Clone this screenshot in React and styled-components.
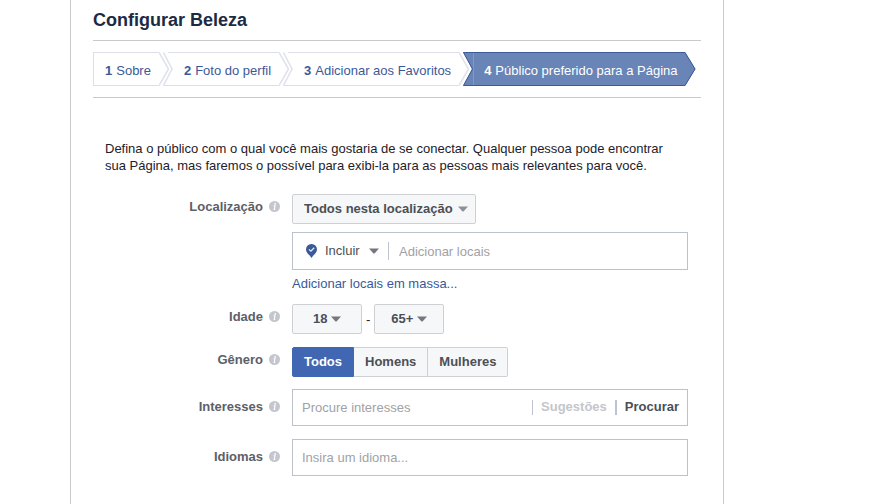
import React, { useState } from "react";
import styled, { createGlobalStyle, css } from "styled-components";

const GlobalStyle = createGlobalStyle`
  *, *::before, *::after { box-sizing: border-box; }
  body { margin: 0; background: #fff; }
  body, button, input, select {
    font-family: "Liberation Sans", Arial, Helvetica, sans-serif;
    font-size: 13px;
    line-height: 17px;
    color: #1d2129;
  }
`;

const Panel = styled.main`
  min-height: 100vh;
  margin: 0 145px 0 70px;
  padding: 8px 22px 0;
  border: solid #c9cacc;
  border-width: 0 1px;
`;

const Title = styled.h1`
  margin: 0;
  padding-bottom: 8px;
  font-size: 18px;
  line-height: 24px;
  color: #1c2a44;
`;

const Steps = styled.ol`
  display: flex;
  margin: 0;
  padding: 11px 0;
  border: solid #c9cacc;
  border-width: 1px 0;
  list-style: none;
`;

const Step = styled.li`
  display: flex;
  height: 34px;
  white-space: nowrap;
`;

const StepLink = styled.a`
  display: flex;
  align-items: center;
  gap: 4px;
  padding: 2px 8px 0 11px;
  border: solid #dcdfe9;
  border-width: 1px 0;
  color: #3b5998;
  text-decoration: none;

  ${Step}:first-child & { border-left-width: 1px; }

  ${(p) =>
    p.$active &&
    css`
      background: #6984b7;
      border-color: #3c5a98;
      color: #fff;
      box-shadow: inset 1px 0 #8198c4;
    `}
`;

const Chevron = styled.svg`
  display: block;
  flex: none;
  height: 34px;
`;

const Intro = styled.p`
  margin: 0;
  padding: 42px 30px 20px 12px;
`;

const Form = styled.form`
  padding: 0 13px 28px 12px;
`;

const Row = styled.div`
  display: grid;
  grid-template-columns: 175px minmax(0, 1fr);
  column-gap: 12px;
  align-items: start;
  margin-bottom: ${(p) => p.$gap || 12}px;
`;

const LabelCell = styled.div`
  display: flex;
  justify-content: flex-end;
  align-items: center;
  gap: 6px;
  padding-top: ${(p) => (p.$tall ? 9 : 4)}px;
  color: #5c6068;
  font-weight: bold;
`;

const Stack = styled.div`
  display: flex;
  flex-direction: column;
  align-items: flex-start;
  gap: 8px;
`;

const Inline = styled.div`
  display: flex;
  align-items: center;
  gap: 4px;
`;

const SelectWrap = styled.span`
  display: inline-grid;
  flex: none;
  align-items: center;
  width: ${(p) => p.$width}px;

  > * { grid-area: 1 / 1; }
  > svg {
    z-index: 1;
    justify-self: start;
    margin-left: 4px;
    pointer-events: none;
  }
  > svg:last-child {
    justify-self: end;
    margin-right: ${(p) => p.$arrow}px;
  }
`;

const Select = styled.select`
  appearance: none;
  width: 100%;
  height: 30px;
  margin: 0;
  padding: 0 0 2px ${(p) => p.$pad}px;
  border: 1px solid #ced0d4;
  border-radius: 2px;
  background: #f6f7f9;
  color: #4b4f56;
  font-weight: bold;

  ${(p) =>
    p.$plain &&
    css`
      border-color: transparent;
      background: transparent;
      font-weight: normal;
    `}
`;

const Field = styled.div`
  display: flex;
  align-items: center;
  width: 100%;
  height: ${(p) => p.$height || 37}px;
  padding: 0 8px 0 9px;
  border: 1px solid #bdc1c9;
  background: #fff;
`;

const TextInput = styled.input`
  flex: 1;
  min-width: 0;
  padding: 0;
  border: 0;
  outline: 0;
  background: transparent;

  &::placeholder { color: #a0a2a6; opacity: 1; }
`;

const Divider = styled.span`
  flex: none;
  width: ${(p) => p.$width || 1}px;
  height: 15px;
  background: #bdc3d0;
`;

const PickerDivider = styled(Divider)`
  height: 18px;
  margin: 0 10px 0 4px;
`;

const TextButton = styled.button`
  padding: 0 0 2px;
  margin: 0 8px;
  border: 0;
  background: none;
  font-weight: bold;
  color: #4b4f56;

  &:disabled { color: #c5c6c9; }
  &:last-child { margin-right: 0; }
`;

const BulkLink = styled.a`
  margin-top: -3px;
  color: #3b5998;
  text-decoration: none;
`;

const Segments = styled.div`
  display: flex;
`;

const Segment = styled.button`
  height: 30px;
  padding: 0 11px 2px;
  border: solid #ced0d4;
  border-width: 1px 1px 1px 0;
  background: #f6f7f9;
  color: #4b4f56;
  font-weight: bold;

  &:first-child { border-left-width: 1px; border-radius: 2px 0 0 2px; }
  &:last-child { border-radius: 0 2px 2px 0; }

  &[aria-pressed="true"] {
    background: #4267b2;
    border-color: #4267b2;
    color: #fff;
  }
`;

function StepArrow({ next }) {
  if (next === "end") {
    return (
      <Chevron width="11" viewBox="0 0 11 34" aria-hidden="true">
        <path d="M0 0 L10.5 17 L0 34Z" fill="#6984b7" />
        <path d="M0 .5 L10 17 L0 33.5" fill="none" stroke="#3c5a98" />
      </Chevron>
    );
  }
  return (
    <Chevron width="14" viewBox="0 0 14 34" aria-hidden="true">
      {next === "active" && (
        <>
          <path d="M4 0H14V34H4L13 17Z" fill="#6984b7" />
          <path d="M14 .5H4.500L13.500 17L4.500 33.500H14" fill="none" stroke="#3c5a98" />
        </>
      )}
      <path d="M0 .5 L9.500 17 L0 33.500" fill="none" stroke="#e0e3ec" strokeWidth="1.600" />
      {next !== "active" && (
        <>
          <path d="M4.500 .5L13 17L4.500 33.500" fill="none" stroke="#e0e3ec" strokeWidth="1.600" />
          <path d="M4.500 33.500H14M9 .5H14" fill="none" stroke="#dcdfe9" />
        </>
      )}
    </Chevron>
  );
}

function Caret({ color = "#73777f" }) {
  return (
    <svg width="10" height="6" viewBox="0 0 10 6" aria-hidden="true">
      <path d="M0 .5H10L5.500 5.500H4.500Z" fill={color} />
    </svg>
  );
}

function InfoIcon() {
  return (
    <svg width="11" height="11" viewBox="0 0 11 11" aria-hidden="true">
      <circle cx="5.500" cy="5.500" r="5.500" fill="#c3c6cd" />
      <circle cx="6.200" cy="2.900" r=".9" fill="#fff" />
      <path d="M4.500 4.800H6L5.200 8.400H6.200" fill="none" stroke="#fff" strokeWidth="1.100" />
    </svg>
  );
}

function PinIcon() {
  return (
    <svg width="11" height="14" viewBox="0 0 11 14" aria-hidden="true">
      <path d="M5.500 0A5.400 5.400 0 0 0 0 5.400C0 8.800 3.300 10.300 5.500 14C7.700 10.300 11 8.800 11 5.400A5.400 5.400 0 0 0 5.500 0Z" fill="#3b5998" />
      <path d="M3 5.400L4.900 7.200L8.200 3.800" fill="none" stroke="#e4e9f3" strokeWidth="1.300" />
    </svg>
  );
}

function Label({ htmlFor, id, tall, children }) {
  return (
    <LabelCell $tall={tall}>
      <label htmlFor={htmlFor} id={id}>{children}</label>
      <InfoIcon />
    </LabelCell>
  );
}

function Dropdown({ width, pad, arrow, plain, caret, icon, options, ...rest }) {
  return (
    <SelectWrap $width={width} $arrow={arrow}>
      {icon}
      <Select $pad={pad} $plain={plain} {...rest}>
        {options.map((o) => <option key={o}>{o}</option>)}
      </Select>
      <Caret color={caret} />
    </SelectWrap>
  );
}

const STEPS = ["Sobre", "Foto do perfil", "Adicionar aos Favoritos", "Público preferido para a Página"];
const GENDERS = ["Todos", "Homens", "Mulheres"];

export default function App() {
  const [gender, setGender] = useState("Todos");
  const last = STEPS.length - 1;

  return (
    <Panel>
      <GlobalStyle />
      <Title>Configurar Beleza</Title>
      <Steps>
        {STEPS.map((name, i) => (
          <Step key={name}>
            <StepLink href="#" $active={i === last} aria-current={i === last ? "step" : undefined}>
              <b>{i + 1}</b>
              <span>{name}</span>
            </StepLink>
            <StepArrow next={i === last ? "end" : i === last - 1 ? "active" : "plain"} />
          </Step>
        ))}
      </Steps>
      <Intro>
        Defina o público com o qual você mais gostaria de se conectar. Qualquer pessoa pode encontrar
        sua Página, mas faremos o possível para exibi-la para as pessoas mais relevantes para você.
      </Intro>
      <Form onSubmit={(e) => e.preventDefault()}>
        <Row>
          <Label htmlFor="scope">Localização</Label>
          <Stack>
            <Dropdown id="scope" width={184} pad={11} arrow={8} caret="#8d9199" options={["Todos nesta localização"]} />
            <Field $height={38}>
              <Dropdown
                aria-label="Incluir ou excluir"
                plain
                width={82}
                pad={22}
                arrow={5}
                icon={<PinIcon />}
                options={["Incluir"]}
              />
              <PickerDivider />
              <TextInput aria-label="Adicionar locais" placeholder="Adicionar locais" />
            </Field>
            <BulkLink href="#">Adicionar locais em massa...</BulkLink>
          </Stack>
        </Row>
        <Row $gap={13}>
          <Label htmlFor="age-min">Idade</Label>
          <Inline>
            <Dropdown id="age-min" width={70} pad={20} arrow={21} options={["18"]} />
            <span>-</span>
            <Dropdown aria-label="Idade máxima" width={70} pad={16} arrow={17} options={["65+"]} />
          </Inline>
        </Row>
        <Row>
          <Label id="gender-label">Gênero</Label>
          <Segments role="group" aria-labelledby="gender-label">
            {GENDERS.map((g) => (
              <Segment key={g} type="button" aria-pressed={g === gender} onClick={() => setGender(g)}>
                {g}
              </Segment>
            ))}
          </Segments>
        </Row>
        <Row $gap={13}>
          <Label htmlFor="interests" tall>Interesses</Label>
          <Field>
            <TextInput id="interests" placeholder="Procure interesses" />
            <Divider />
            <TextButton type="button" disabled>Sugestões</TextButton>
            <Divider $width={2} />
            <TextButton type="button">Procurar</TextButton>
          </Field>
        </Row>
        <Row>
          <Label htmlFor="languages" tall>Idiomas</Label>
          <Field>
            <TextInput id="languages" placeholder="Insira um idioma..." />
          </Field>
        </Row>
      </Form>
    </Panel>
  );
}
